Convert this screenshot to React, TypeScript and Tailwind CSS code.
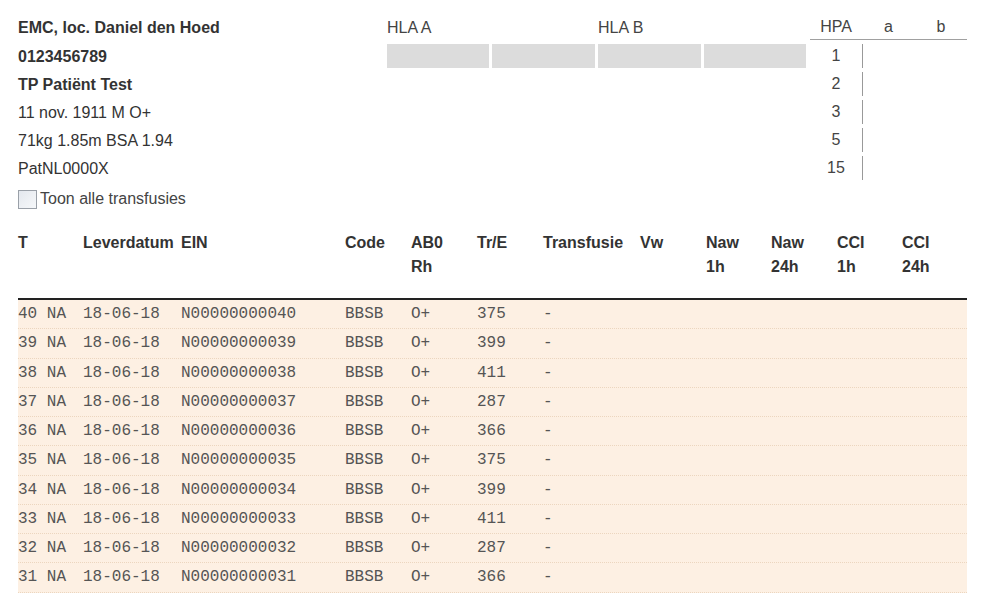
import React from "react";

const rows = [
  ["40", "N00000000040", "375"],
  ["39", "N00000000039", "399"],
  ["38", "N00000000038", "411"],
  ["37", "N00000000037", "287"],
  ["36", "N00000000036", "366"],
  ["35", "N00000000035", "375"],
  ["34", "N00000000034", "399"],
  ["33", "N00000000033", "411"],
  ["32", "N00000000032", "287"],
  ["31", "N00000000031", "366"],
];

const cols =
  "grid grid-cols-[65px_98px_164px_66px_66px_66px_97px_66px_65px_66px_65px_65px]";

export default function App() {
  return (
    <div className="w-[989px] h-[611px] overflow-hidden bg-white text-[#333] text-[16px] font-['Liberation_Sans',Arial,sans-serif]">
      <div className="ml-[18px] pt-[14px] w-[949px]">
        {/* top section */}
        <div className="flex">
          <div className="w-[369px] shrink-0">
            <div className="h-[28px] leading-[28px] font-bold mb-[1px]">EMC, loc. Daniel den Hoed</div>
            <div className="h-[28px] leading-[28px] font-bold">0123456789</div>
            <div className="h-[28px] leading-[28px] font-bold">TP Patiënt Test</div>
            <div className="h-[28px] leading-[28px]">11 nov. 1911 M O+</div>
            <div className="h-[28px] leading-[28px]">71kg 1.85m BSA 1.94</div>
            <div className="h-[28px] leading-[28px]">PatNL0000X</div>
          </div>
          <div className="w-[419px] shrink-0 text-[#444]">
            <div className="flex h-[28px] leading-[28px]">
              <div className="w-[211px]">HLA A</div>
              <div>HLA B</div>
            </div>
            <div className="flex mt-[2px] gap-[3px] h-[24px]">
              <div className="w-[102px] bg-[#dcdcdc]" />
              <div className="w-[104px] bg-[#dcdcdc]" />
              <div className="w-[103px] bg-[#dcdcdc]" />
              <div className="w-[103px] bg-[#dcdcdc]" />
            </div>
          </div>
          <div className="ml-[4px] w-[157px] shrink-0 text-[#444]">
            <div className="grid grid-cols-[52px_53px_52px] h-[26px] leading-[26px] border-b border-[#a0a0a0] text-center">
              <div>HPA</div>
              <div>a</div>
              <div>b</div>
            </div>
            {["1", "2", "3", "5", "15"].map((n, i) => (
              <div
                key={n}
                className={`grid grid-cols-[52px_53px_52px] h-[28px] items-center ${i === 0 ? "mt-[2px]" : ""}`}
              >
                <div className="text-center leading-[28px]">{n}</div>
                <div className="h-[24px] border-l border-[#999]" />
                <div />
              </div>
            ))}
          </div>
        </div>

        {/* checkbox */}
        <div className="flex items-center h-[28px] mt-[2px]">
          <span className="w-[19px] h-[19px] border border-[#9aa0a8] bg-gradient-to-br from-[#e4e8ee] to-[#f6f8fa] inline-block" />
          <span className="ml-[3px] text-[#444]">Toon alle transfusies</span>
        </div>

        {/* table header */}
        <div className={`${cols} mt-[18px] font-bold leading-[24px] pb-[19px] border-b-2 border-[#222]`}>
          <div>T</div>
          <div>Leverdatum</div>
          <div>EIN</div>
          <div>Code</div>
          <div>AB0<br />Rh</div>
          <div>Tr/E</div>
          <div>Transfusie</div>
          <div>Vw</div>
          <div>Naw<br />1h</div>
          <div>Naw<br />24h</div>
          <div>CCI<br />1h</div>
          <div>CCI<br />24h</div>
        </div>

        {/* rows */}
        {rows.map(([t, ein, tre]) => (
          <div
            key={t}
            className={`${cols} h-[29.25px] leading-[28px] bg-[#fdf0e3] border-b border-dotted border-[#ecd6bf] text-[#555] font-['Liberation_Mono','Courier_New',monospace] text-[16px]`}
          >
            <div>{t} NA</div>
            <div>18-06-18</div>
            <div>{ein}</div>
            <div>BBSB</div>
            <div>O+</div>
            <div>{tre}</div>
            <div>-</div>
            <div />
            <div />
            <div />
            <div />
            <div />
          </div>
        ))}
      </div>
    </div>
  );
}
